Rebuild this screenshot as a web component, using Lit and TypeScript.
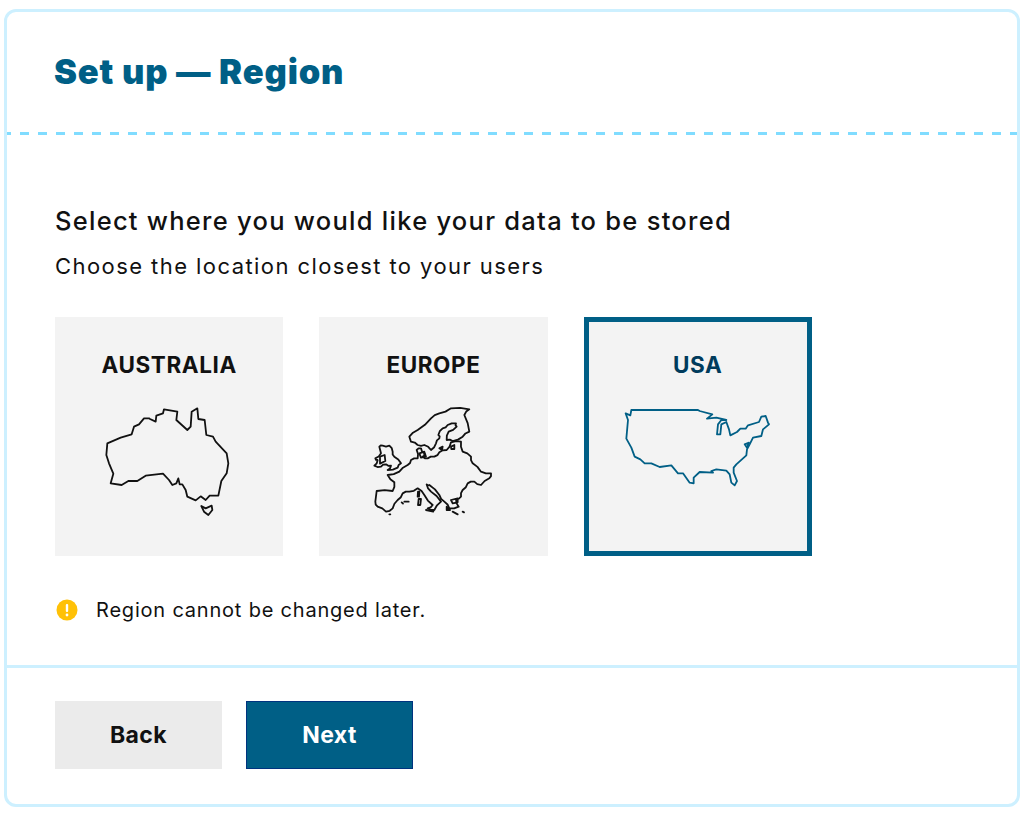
import { LitElement, html, css, svg } from "lit";
import { customElement } from "lit/decorators.js";

/* Adds a small alternating offset between outline points, so a coarse trace reads as a coastline. */
const jag = (d: string, amp = 2.6) => {
  let flip = 1;
  return d.replace(/L(-?[\d.]+),(-?[\d.]+)/g, (_m, x, y, idx, all) => {
    const before = all.slice(0, idx).match(/(-?[\d.]+),(-?[\d.]+)\s*$/);
    if (!before) return `L${x},${y}`;
    const px = +before[1];
    const py = +before[2];
    const dx = +x - px;
    const dy = +y - py;
    const len = Math.hypot(dx, dy) || 1;
    flip = -flip;
    const mx = (px + +x) / 2 - (dy / len) * amp * flip;
    const my = (py + +y) / 2 + (dx / len) * amp * flip;
    return `L${mx.toFixed(1)},${my.toFixed(1)} L${x},${y}`;
  });
};

const maps = {
  au: {
    vb: "0 0 480 390", w: 160, h: 130,
    d: [
      "M55,145 L52,180 L60,205 L73,236 L65,265 L98,270 L118,258 L145,258 L170,242 L222,236 L240,255 L250,270 L262,265 L268,250 L272,268 L280,268 L290,285 L295,305 L320,316 L335,304 L350,315 L362,302 L388,302 L397,258 L413,235 L418,205 L413,175 L380,140 L372,125 L352,120 L347,75 L328,72 L325,40 L308,50 L305,95 L295,105 L262,75 L265,50 L225,43 L222,55 L202,62 L200,80 L183,72 L180,70 L165,70 L150,88 L135,95 L128,118 L95,128 Z",
      "M337,333 L350,340 L368,332 L370,345 L358,360 L345,350 Z",
    ],
  },
  eu: {
    vb: "-4 0 450 390", w: 150, h: 130,
    d: [
      jag("M52,288 L100,288 L105,262 L85,240 L120,230 L145,210 L155,195 L175,190 L172,165 L185,160 L195,175 L190,185 L205,190 L225,185 L240,172 L262,165 L275,142 L305,140 L310,170 L335,185 L340,205 L365,230 L395,235 L390,250 L365,270 L345,260 L325,265 L310,285 L305,305 L290,312 L298,335 L270,340 L255,320 L240,300 L210,270 L202,268 L215,290 L245,320 L225,345 L205,340 L220,330 L195,300 L175,280 L150,290 L130,295 L115,315 L100,340 L80,350 L55,335 L48,320 Z"),
      jag("M150,125 L175,105 L215,70 L240,55 L275,40 L330,43 L315,60 L330,110 L310,125 L280,138 L262,135 L268,110 L292,95 L290,85 L265,90 L250,100 L237,120 L240,130 L230,145 L215,165 L195,150 L175,150 L155,140 Z"),
      jag("M60,155 L70,152 L90,152 L100,170 L105,185 L125,205 L115,218 L85,225 L95,212 L80,208 L65,215 L45,212 L55,195 L48,190 L65,175 Z"),
      "M62,185 L76,180 L78,198 L62,206 Z",
      "M178,312 L185,312 L183,330 L176,330 Z",
      "M176,290 L180,290 L179,305 L175,305 Z",
      "M127,322 L131,326 M135,320 L148,320",
      "M240,160 L250,155 L248,165 Z",
      "M275,155 L285,150 L285,162 L276,162 Z",
      "M180,175 L195,170 L200,185 L185,188 Z",
      "M262,335 L272,345 L262,345 Z M275,315 L295,310 L295,322 L280,325 Z M280,350 L295,358 M310,350 L314,352 M90,358 L93,358 M200,345 L222,350",
    ],
  },
  us: {
    vb: "10 -3 510 300", w: 170, h: 100,
    d: [
      "M48,52 L62,58 L65,42 L265,42 L270,45 L308,55 L292,68 L320,65 L350,72 L335,72 L325,85 L322,115 L332,115 L335,85 L350,78 L358,100 L362,118 L382,108 L392,98 L408,98 L415,88 L448,78 L455,62 L468,60 L475,80 L478,85 L460,100 L455,120 L430,125 L420,145 L412,160 L410,178 L380,205 L372,215 L372,230 L382,255 L375,268 L365,260 L360,235 L350,224 L320,220 L305,225 L310,230 L270,228 L252,245 L252,262 L240,260 L220,232 L205,232 L185,208 L150,213 L125,202 L105,202 L92,190 L75,182 L65,155 L50,128 L55,72 Z",
      "M405,145 L418,140 L412,155 Z",
    ],
  },
};

type M = { vb: string; w: number; h: number; d: string[] };
const mapSvg = (m: M) => html`<svg class="map" width=${m.w} height=${m.h} viewBox=${m.vb} fill="none" stroke="currentColor" stroke-width="5.4" stroke-linejoin="round" stroke-linecap="round">
  ${m.d.map((d) => svg`<path d=${d}></path>`)}
</svg>`;

@customElement("app-root")
export class AppRoot extends LitElement {
  static styles = css`
    :host {
      display: block;
      padding: 9px 4px;
      font-family: "Inter", "Liberation Sans", sans-serif;
      color: #111;
      background: #fff;
    }
    .panel {
      height: 798px;
      box-sizing: border-box;
      border: 3px solid #cdf0ff;
      border-radius: 12px;
      display: flex;
      flex-direction: column;
    }
    .head {
      height: 120px;
      box-sizing: border-box;
      padding: 0 0 0 47px;
      display: flex;
      align-items: center;
    }
    .dash {
      height: 3px;
      background: repeating-linear-gradient(90deg, #80dcff 0 4px, transparent 4px 13px, #80dcff 13px 18px);
    }
    h1 {
      margin: 0 0 2px;
      font-size: 34.5px;
      font-weight: 900;
      color: #005f86;
      letter-spacing: 0.85px;
    }
    .body {
      flex: 1;
      padding: 72px 0 0 48px;
      box-sizing: border-box;
      border-bottom: 3px solid #cdf0ff;
    }
    h2 {
      margin: 0;
      font-size: 25.5px;
      line-height: 28px;
      font-weight: 500;
      letter-spacing: 1.26px;
    }
    p.sub {
      margin: 18px 0 0;
      font-size: 22px;
      line-height: 26px;
      font-weight: 400;
      letter-spacing: 1.43px;
    }
    .cards {
      display: flex;
      gap: 36px;
      margin-top: 38px;
    }
    .card {
      width: 228.3px;
      height: 239px;
      box-sizing: border-box;
      background: #f3f3f3;
      display: flex;
      flex-direction: column;
      align-items: center;
      padding-top: 35px;
    }
    .card.sel {
      border: 5px solid #005f86;
      padding-top: 30px;
      color: #003b5c;
    }
    .card.sel .map { color: #005f86; }
    .card .name {
      font-size: 22.5px;
      line-height: 26px;
      font-weight: 700;
      letter-spacing: 0.6px;
    }
    .map { margin-top: 17px; display: block; }
    .note {
      display: flex;
      align-items: center;
      margin-top: 42px;
      font-size: 20px;
      line-height: 24px;
      letter-spacing: 0.8px;
    }
    .note svg { margin: 0 18px 0 1px; }
    .foot {
      flex: none;
      height: 136px;
      box-sizing: border-box;
      padding: 33px 0 0 48px;
      display: flex;
      gap: 24px;
    }
    .btn {
      width: 167px;
      height: 68px;
      display: flex;
      align-items: center;
      justify-content: center;
      font-size: 23px;
      font-weight: 700;
      letter-spacing: 0.4px;
      box-sizing: border-box;
      background: #ebebeb;
    }
    .btn.primary {
      background: #005f86;
      color: #fff;
      border: 1px solid #00337f;
    }
  `;

  render() {
    return html`<div class="panel">
      <div class="head"><h1>Set up — Region</h1></div>
      <div class="dash"></div>
      <div class="body">
        <h2>Select where you would like your data to be stored</h2>
        <p class="sub">Choose the location closest to your users</p>
        <div class="cards">
          <div class="card"><div class="name">AUSTRALIA</div>${mapSvg(maps.au)}</div>
          <div class="card"><div class="name">EUROPE</div>${mapSvg(maps.eu)}</div>
          <div class="card sel"><div class="name">USA</div>${mapSvg(maps.us)}</div>
        </div>
        <div class="note">
          <svg width="22" height="22" viewBox="0 0 22 22">
            <circle cx="11" cy="11" r="10.5" fill="#ffc107"></circle>
            <rect x="9.8" y="5" width="2.4" height="8" rx="1" fill="#fff"></rect>
            <circle cx="11" cy="16" r="1.4" fill="#fff"></circle>
          </svg>
          <span>Region cannot be changed later.</span>
        </div>
      </div>
      <div class="foot">
        <div class="btn">Back</div>
        <div class="btn primary">Next</div>
      </div>
    </div>`;
  }
}
